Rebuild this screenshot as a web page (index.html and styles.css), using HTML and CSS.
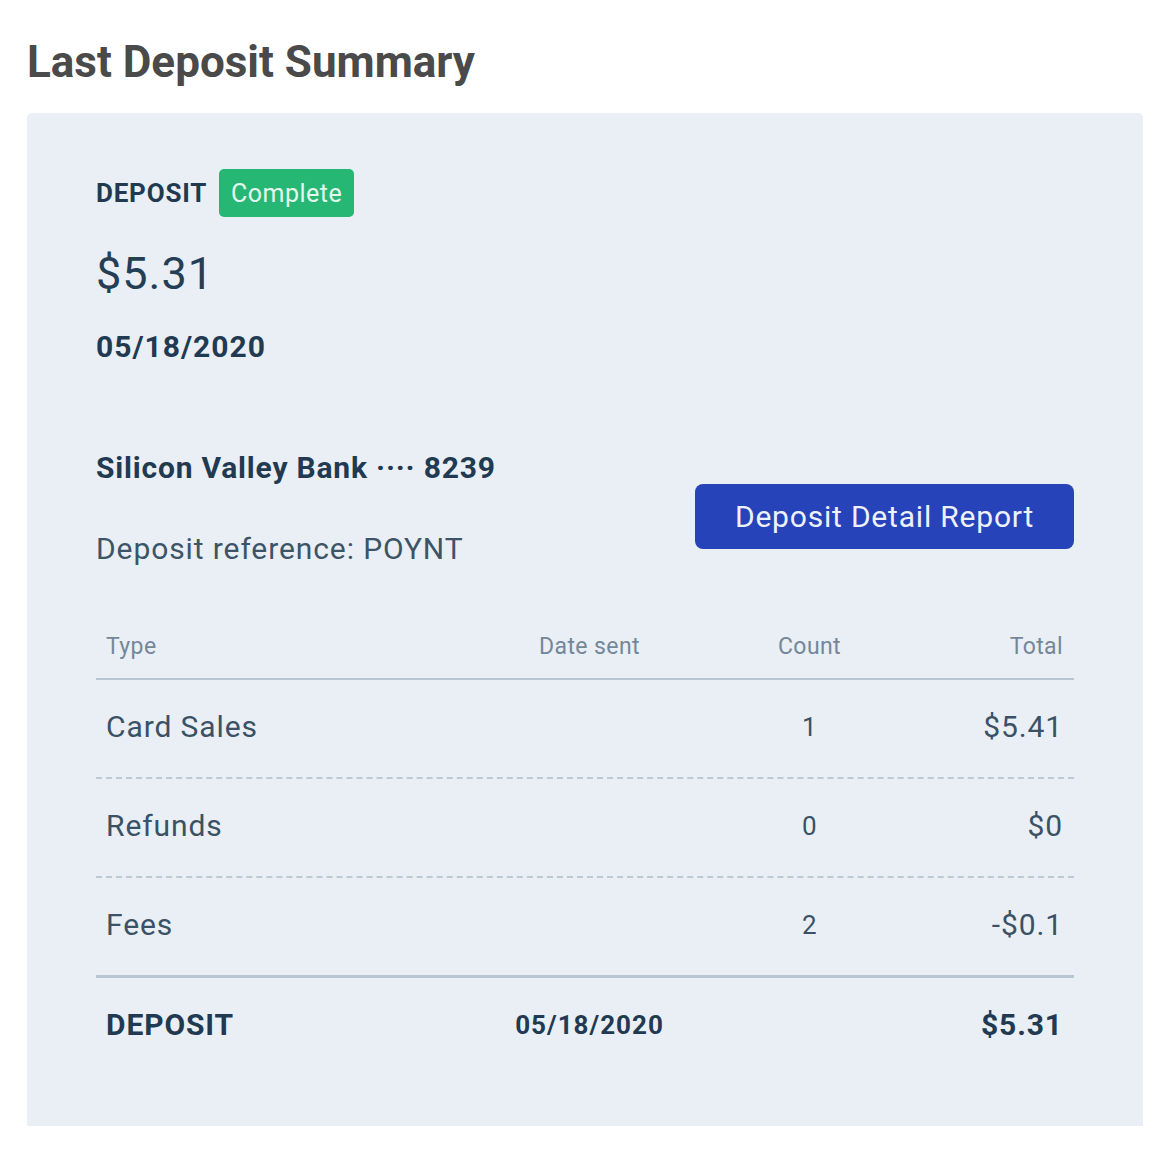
FILE: index.html
```html
<!DOCTYPE html>
<html lang="en">
<head>
<meta charset="utf-8">
<title>Last Deposit Summary</title>
<link rel="stylesheet" href="styles.css">
</head>
<body>
<div class="page">
  <h1 class="title">Last Deposit Summary</h1>
  <section class="card">
    <div class="status-row">
      <span class="status-label">DEPOSIT</span>
      <span class="badge">Complete</span>
    </div>
    <div class="amount">$5.31</div>
    <div class="deposit-date">05/18/2020</div>
    <div class="bank-row">
      <div class="bank-info">
        <div class="bank-name">Silicon Valley Bank ···· 8239</div>
        <div class="bank-ref">Deposit reference: POYNT</div>
      </div>
      <button class="report-btn" type="button">Deposit Detail Report</button>
    </div>
    <div class="table">
      <div class="row head">
        <div class="cell c-type">Type</div>
        <div class="cell c-date">Date sent</div>
        <div class="cell c-count">Count</div>
        <div class="cell c-total">Total</div>
      </div>
      <div class="row body dashed">
        <div class="cell c-type">Card Sales</div>
        <div class="cell c-date"></div>
        <div class="cell c-count">1</div>
        <div class="cell c-total">$5.41</div>
      </div>
      <div class="row body dashed">
        <div class="cell c-type">Refunds</div>
        <div class="cell c-date"></div>
        <div class="cell c-count">0</div>
        <div class="cell c-total">$0</div>
      </div>
      <div class="row body last">
        <div class="cell c-type">Fees</div>
        <div class="cell c-date"></div>
        <div class="cell c-count">2</div>
        <div class="cell c-total">-$0.1</div>
      </div>
      <div class="row body foot">
        <div class="cell c-type">DEPOSIT</div>
        <div class="cell c-date">05/18/2020</div>
        <div class="cell c-count"></div>
        <div class="cell c-total">$5.31</div>
      </div>
    </div>
  </section>
</div>
</body>
</html>
```
FILE: styles.css
```css
html, body {
  margin: 0;
  padding: 0;
  background: #ffffff;
}

body {
  font-family: Roboto, "Liberation Sans", Arial, sans-serif;
  color: #2a4258;
}

.page {
  padding: 38px 27px 0 27px;
}

.title {
  margin: 0;
  font-size: 44px;
  line-height: 48px;
  font-weight: 700;
  color: #4a4a4a;
}

.card {
  margin-top: 27px;
  width: 1116px;
  box-sizing: border-box;
  background: #e9eff4;
  border-radius: 5px 5px 0 0;
  padding: 56px 69px 51px 69px;
}

.status-row {
  display: flex;
  align-items: center;
  gap: 12px;
  height: 48px;
}

.status-label {
  font-size: 26px;
  letter-spacing: 0.8px;
  font-weight: 700;
  color: #213a52;
}

.badge {
  display: inline-flex;
  align-items: center;
  justify-content: center;
  width: 135px;
  height: 48px;
  border-radius: 5px;
  background: #27b775;
  color: #e4f7ec;
  font-size: 25px;
  letter-spacing: 0.5px;
}

.amount {
  margin-top: 31px;
  font-size: 45px;
  letter-spacing: 1px;
  line-height: 52px;
  color: #253e55;
}

.deposit-date {
  margin-top: 30px;
  font-size: 30px;
  letter-spacing: 1px;
  line-height: 34px;
  font-weight: 700;
  color: #213a52;
}

.bank-row {
  margin-top: 88px;
  display: flex;
  justify-content: space-between;
  align-items: flex-start;
}

.bank-name {
  font-size: 30px;
  letter-spacing: 0.8px;
  line-height: 32px;
  font-weight: 700;
  color: #213a52;
}

.bank-ref {
  margin-top: 49px;
  font-size: 30px;
  letter-spacing: 0.9px;
  line-height: 32px;
  color: #3d5468;
}

.report-btn {
  margin-top: 32px;
  width: 379px;
  height: 65px;
  border: none;
  border-radius: 8px;
  background: #2643b9;
  color: #eef1fb;
  font-family: Roboto, "Liberation Sans", Arial, sans-serif;
  font-size: 30px;
  letter-spacing: 0.8px;
  padding: 0;
}

.table {
  margin-top: 67px;
}

.row {
  display: grid;
  grid-template-columns: 384px 220px 220px 1fr;
}

.cell {
  padding: 0 11px 0 10px;
}

.c-date, .c-count {
  text-align: center;
}

.c-total {
  text-align: right;
}

.head {
  border-bottom: 2px solid #b8c6d3;
}

.head .cell {
  font-size: 23px;
  letter-spacing: 0.4px;
  line-height: 30px;
  padding-bottom: 16px;
  color: #74879a;
}

.body .cell {
  font-size: 30px;
  letter-spacing: 0.9px;
  line-height: 94px;
  padding-bottom: 3px;
  color: #3a5166;
}

.body .c-count {
  font-size: 26px;
  letter-spacing: 0.5px;
}

.dashed {
  border-bottom: 2px dashed #bccad6;
}

.last {
  border-bottom: 3px solid #b8c7d4;
}

.foot .cell {
  font-weight: 700;
  color: #213a52;
}

.foot .c-date {
  font-size: 26px;
  letter-spacing: 1px;
}
```
